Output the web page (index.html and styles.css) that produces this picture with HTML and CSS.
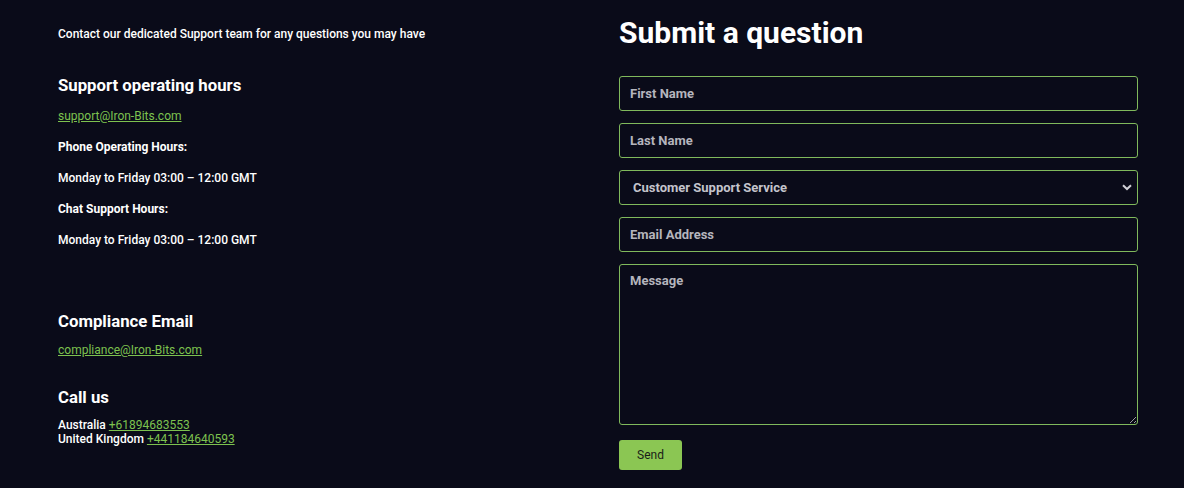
FILE: index.html
```html
<!DOCTYPE html>
<html lang="en">
<head>
<meta charset="utf-8">
<title>Contact</title>
<link rel="stylesheet" href="styles.css">
</head>
<body>
<main class="page">
  <section class="info">
    <p class="intro">Contact our dedicated Support team for any questions you may have</p>
    <h3 class="heading h-support">Support operating hours</h3>
    <p class="line link-line"><a href="#">support@Iron-Bits.com</a></p>
    <p class="line strong">Phone Operating Hours:</p>
    <p class="line">Monday to Friday 03:00 – 12:00 GMT</p>
    <p class="line strong">Chat Support Hours:</p>
    <p class="line">Monday to Friday 03:00 – 12:00 GMT</p>
    <h3 class="heading h-compliance">Compliance Email</h3>
    <p class="line link-line tight"><a href="#">compliance@Iron-Bits.com</a></p>
    <h3 class="heading h-call">Call us</h3>
    <p class="phones">Australia <a href="#">+61894683553</a><br>United Kingdom <a href="#">+441184640593</a></p>
  </section>
  <section class="form-col">
    <h2 class="title">Submit a question</h2>
    <form class="form">
      <input class="field" type="text" placeholder="First Name">
      <input class="field" type="text" placeholder="Last Name">
      <div class="select-wrap">
        <select class="field select">
          <option>Customer Support Service</option>
        </select>
        <svg class="chevron" width="10" height="7" viewBox="0 0 10 7"><path d="M1 1.2 L5 5 L9 1.2" fill="none" stroke="#d0d0d6" stroke-width="2"/></svg>
      </div>
      <input class="field" type="email" placeholder="Email Address">
      <textarea class="field area" placeholder="Message"></textarea>
      <div class="actions"><button type="button" class="send">Send</button></div>
    </form>
  </section>
</main>
</body>
</html>
```
FILE: styles.css
```css
html, body {
  margin: 0;
  padding: 0;
  background: #0a0b19;
}
body {
  font-family: Roboto, "Noto Sans", Arial, sans-serif;
  color: #ffffff;
}
.page {
  display: grid;
  grid-template-columns: 1fr 519px;
  column-gap: 40px;
  padding: 0 46px 0 58px;
  height: 488px;
  box-sizing: border-box;
}
.info {
  padding-top: 25px;
}
.intro {
  margin: 0;
  font-size: 12px;
  line-height: 18px;
  font-weight: 500;
}
.heading {
  margin: 0;
  font-size: 16.75px;
  line-height: 24px;
  font-weight: 700;
}
.h-support { margin-top: 30px; }
.h-compliance { margin-top: 60px; }
.h-call { margin-top: 26px; }
.line {
  margin: 13px 0 0;
  font-size: 12px;
  line-height: 18px;
  font-weight: 500;
}
.line.strong { font-weight: 700; }
.link-line { margin-top: 10px; font-weight: 400; }
.link-line.tight { margin-top: 8px; }
a {
  color: #7dc24f;
  text-decoration: underline;
  text-underline-offset: 1px;
}
.phones {
  margin: 9px 0 0;
  font-size: 12px;
  line-height: 14px;
  font-weight: 500;
}
.phones a { font-weight: 400; }
.form-col {
  padding-top: 15px;
}
.title {
  margin: 0;
  font-size: 30px;
  line-height: 36px;
  font-weight: 700;
}
.form {
  margin-top: 25px;
  display: flex;
  flex-direction: column;
  gap: 12px;
}
.field {
  display: block;
  width: 100%;
  box-sizing: border-box;
  height: 35px;
  margin: 0;
  padding: 0 10px;
  background: #0a0b19;
  border: 1px solid #80b95c;
  border-radius: 3px;
  color: #ffffff;
  font-family: Roboto, Arial, sans-serif;
  font-size: 13px;
  font-weight: 700;
  outline: none;
}
.field::placeholder {
  color: #b5b5bd;
  opacity: 1;
}
.select-wrap {
  position: relative;
}
.select {
  appearance: none;
  -webkit-appearance: none;
  padding-left: 13px;
  color: #c4c4cc;
}
.chevron {
  position: absolute;
  right: 6px;
  top: 14px;
  pointer-events: none;
}
.area {
  height: 161px;
  padding-top: 8px;
  resize: vertical;
}
.actions {
  margin-top: 3px;
}
.send {
  width: 63px;
  height: 30px;
  border: none;
  border-radius: 3px;
  background: #8bc653;
  color: #1a1d18;
  font-family: Roboto, Arial, sans-serif;
  font-size: 12px;
  font-weight: 400;
  padding: 0;
}
```
